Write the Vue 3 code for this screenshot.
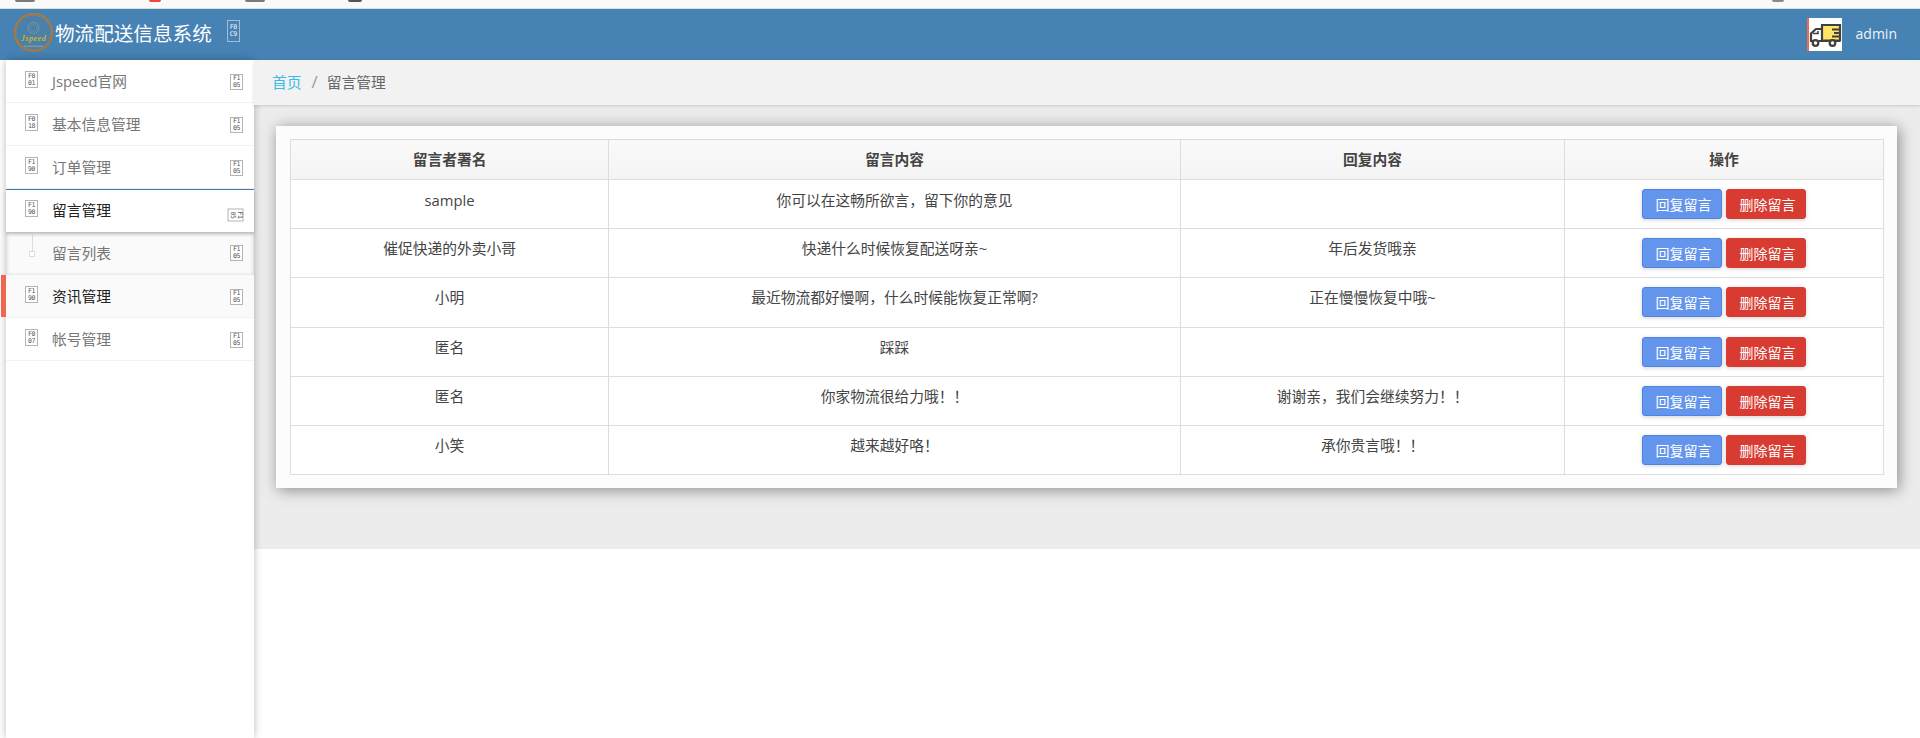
<script setup>
const menu = [
  { label: 'Jspeed官网', icon: ['F0', '01'] },
  { label: '基本信息管理', icon: ['F0', '18'] },
  { label: '订单管理', icon: ['F1', '90'] },
  { label: '留言管理', icon: ['F1', '90'], open: true },
  { label: '留言列表', sub: true },
  { label: '资讯管理', icon: ['F1', '90'], hot: true },
  { label: '帐号管理', icon: ['F0', '07'] }
]
const rows = [
  ['sample', '你可以在这畅所欲言，留下你的意见', ''],
  ['催促快递的外卖小哥', '快递什么时候恢复配送呀亲~', '年后发货哦亲'],
  ['小明', '最近物流都好慢啊，什么时候能恢复正常啊?', '正在慢慢恢复中哦~'],
  ['匿名', '踩踩', ''],
  ['匿名', '你家物流很给力哦！！', '谢谢亲，我们会继续努力！！'],
  ['小笑', '越来越好咯！', '承你贵言哦！！']
]
</script>

<template>
  <div class="page">
    <div class="chrome">
      <i class="tab t1"></i><i class="tab t2"></i><i class="tab t3"></i><i class="tab t4"></i><i class="tab t5"></i>
    </div>
    <header class="topbar">
      <svg class="logo" viewBox="0 0 40 42" aria-hidden="true">
        <circle cx="19.5" cy="19.5" r="18.8" fill="#4a80aa" stroke="#c9731c" stroke-width="1.5" />
        <circle cx="19.5" cy="19.5" r="17.2" fill="none" stroke="#8f8a6a" stroke-width=".5" />
        <circle cx="19.5" cy="15" r="5.5" fill="none" stroke="#8fa0a0" stroke-width=".7" />
        <circle cx="19.5" cy="15" r="3.4" fill="none" stroke="#8fa0a0" stroke-width=".4" />
        <text x="19.5" y="28" text-anchor="middle" class="logo-word">Jspeed</text>
        <rect x="10" y="32.5" width="19" height="1.6" fill="#9aa08a" opacity=".7" />
      </svg>
      <span class="title">物流配送信息系统</span>
      <span class="tofu tofu-head"><b>F0</b><b>C9</b></span>
      <span class="grow"></span>
      <span class="avatar">
        <svg viewBox="0 0 33 33" width="33" height="33" aria-hidden="true">
          <path d="M13 7h18v15.500H13z" fill="#ffe566" stroke="#404040" stroke-width="2.200" />
          <path d="M23 11.500h8M25 15h6M23 18.500h8" stroke="#404040" stroke-width="1.800" />
          <path d="M13 11H7l-5 4.500v7.500h3M9.500 23h10M27 23h4" fill="none" stroke="#404040" stroke-width="2.200" />
          <path d="M4 15.500h5v-2.500" fill="none" stroke="#404040" stroke-width="1.600" />
          <circle cx="6.500" cy="25" r="2.800" fill="#fff" stroke="#404040" stroke-width="2.200" />
          <circle cx="23.500" cy="25" r="2.800" fill="#fff" stroke="#404040" stroke-width="2.200" />
        </svg>
      </span>
      <span class="user">admin</span>
    </header>
    <div class="body">
      <aside class="side">
        <div
          v-for="m in menu"
          :key="m.label"
          class="item"
          :class="{ open: m.open, sub: m.sub, hot: m.hot }"
        >
          <span v-if="m.icon" class="tofu tofu-lead"><b>{{ m.icon[0] }}</b><b>{{ m.icon[1] }}</b></span>
          <span v-else class="tree"></span>
          <span class="label">{{ m.label }}</span>
          <span class="tofu tofu-arrow" :class="{ turned: m.open }"><b>F1</b><b>05</b></span>
        </div>
      </aside>
      <main class="main">
        <div class="panel">
          <nav class="crumb">
            <a class="home">首页</a>
            <span class="sep">/</span>
            <span class="here">留言管理</span>
          </nav>
          <section class="card">
            <table>
              <colgroup>
                <col class="c1" /><col class="c2" /><col class="c3" /><col class="c4" />
              </colgroup>
              <thead>
                <tr><th>留言者署名</th><th>留言内容</th><th>回复内容</th><th>操作</th></tr>
              </thead>
              <tbody>
                <tr v-for="(r, i) in rows" :key="i">
                  <td v-for="(c, j) in r" :key="j">{{ c }}</td>
                  <td class="ops">
                    <button class="btn blue">回复留言</button>
                    <button class="btn red">删除留言</button>
                  </td>
                </tr>
              </tbody>
            </table>
          </section>
        </div>
      </main>
    </div>
  </div>
</template>

<style>
html, body { margin: 0; background: #fff; }
</style>

<style scoped>
.page {
  height: 738px;
  overflow: hidden;
  display: flex;
  flex-direction: column;
  font-family: "Open Sans", "Noto Sans CJK SC", sans-serif;
  font-size: 14.75px;
  color: #555;
}
.chrome {
  height: 8px;
  flex: none;
  background: #f9f9f9;
  border-bottom: 1px solid #dcdcdc;
  display: flex;
  align-items: flex-start;
}
.tab { display: block; height: 2px; border-radius: 0 0 3px 3px; background: #7a7a7a; }
.t1 { width: 20px; margin-left: 15px; }
.t2 { width: 12px; margin-left: 114px; background: #f2443a; border-radius: 0 0 6px 6px; }
.t3 { width: 20px; margin-left: 84px; }
.t4 { width: 14px; margin-left: 83px; background: #555; border-radius: 0 0 7px 7px; }
.t5 { width: 12px; margin-left: 1410px; background: #8a8a8a; }

.topbar {
  height: 51px;
  flex: none;
  background: #4682b4;
  display: flex;
  align-items: flex-start;
  color: #fff;
}
.logo { width: 40px; height: 42px; margin: 4px 0 0 14px; flex: none; }
.logo-word {
  font-family: "Liberation Serif", serif;
  font-style: italic;
  font-weight: 700;
  font-size: 8.5px;
  letter-spacing: .3px;
  fill: #c9b02c;
}
.title { font-size: 19.6px; line-height: 28px; margin: 11px 0 0 1px; white-space: nowrap; }
.grow { flex: 1; }
.avatar {
  width: 33px;
  height: 33px;
  margin-top: 9px;
  background: #fff;
  border-left: 2px solid #f4694c;
  flex: none;
}
.avatar svg { display: block; }
.user { font-size: 14px; line-height: 20px; margin: 15px 23px 0 14px; color: #eef3f8; }

.tofu {
  box-sizing: border-box;
  display: inline-flex;
  flex-direction: column;
  align-items: center;
  justify-content: center;
  flex: none;
  width: 13px;
  height: 17px;
  border: 1px solid #b4b4b4;
  font-family: "DejaVu Sans Mono", monospace;
  font-size: 6.5px;
  line-height: 7px;
  letter-spacing: -.3px;
  color: #555;
  background: #fff;
}
.tofu b { font-weight: 400; display: block; }
.tofu-head {
  height: 22px;
  margin: 11px 0 0 15px;
  background: transparent;
  border-color: #9dbdd8;
  color: #f0f5fa;
}
.tofu-lead { margin-top: 11px; }
.tofu-arrow { height: 16px; margin: 14px 0 0 auto; }
.tofu-arrow.turned { transform: rotate(90deg); margin: 17px 1px 0 auto; }

.body { flex: 1; display: flex; min-height: 0; padding-left: 6px; }
.side {
  width: 248px;
  flex: none;
  background: #fff;
  box-shadow: 0 0 8px rgba(0, 0, 0, .28);
  position: relative;
  z-index: 1;
}
.item {
  box-sizing: border-box;
  height: 43px;
  display: flex;
  align-items: flex-start;
  padding: 0 11px 0 19px;
  border-bottom: 1px solid #f2f2f2;
  position: relative;
  color: #777;
}
.label { margin: 10px 0 0 14px; line-height: 22px; white-space: nowrap; }
.item.open {
  border-top: 1px solid #3f7bb0;
  color: #222;
  border-bottom: 0;
  box-shadow: 0 2px 4px rgba(0, 0, 0, .14);
  z-index: 1;
}
.item.open .label { margin-top: 9px; }
.item.open .tofu-lead { margin-top: 10px; }
.item.sub { background: #fafafa; box-shadow: 0 1px 4px rgba(0, 0, 0, .22) inset; border-bottom: 0; }
.item.sub .tofu-arrow { margin-top: 13px; }
.item.hot { background: #fafafa; color: #222; }
.item.hot::before {
  content: "";
  position: absolute;
  left: -5px;
  top: 0;
  bottom: 0;
  width: 5px;
  background: #ee6650;
}
.tree { width: 13px; flex: none; position: relative; align-self: stretch; }
.tree::before {
  content: "";
  position: absolute;
  left: 7px;
  top: 0;
  height: 19px;
  width: 1px;
  background: #ddd;
}
.tree::after {
  content: "";
  position: absolute;
  left: 4px;
  top: 19px;
  width: 4px;
  height: 4px;
  border: 1px solid #ddd;
  background: #fff;
}

.main { flex: 1; min-width: 0; }
.panel { height: 489px; background: #ececec; position: relative; }
.crumb {
  box-sizing: border-box;
  height: 45px;
  padding: 0 0 2px 18px;
  display: flex;
  align-items: center;
  background: #f2f2f2;
  box-shadow: 0 1px 3px rgba(0, 0, 0, .15);
  position: relative;
  z-index: 2;
}
.home { color: #3cb9e6; }
.sep { margin: 0 9px 0 10px; color: #999; font-size: 17px; }
.here { color: #666; }
.card {
  margin: 21px 23px 0 22px;
  padding: 13px 13px 13px 14px;
  background: #fcfcfc;
  box-shadow: 2px 2px 14px rgba(0, 0, 0, .42);
}
table {
  width: 100%;
  table-layout: fixed;
  border-collapse: collapse;
  background: #fff;
  color: #444;
}
.c1 { width: 318px; }
.c2 { width: 572px; }
.c3 { width: 384px; }
.c4 { width: 319px; }
th, td { border: 1px solid #ddd; text-align: center; padding: 0; }
th {
  height: 40px;
  box-sizing: border-box;
  padding-bottom: 2px;
  font-weight: 700;
  color: #444;
  background: linear-gradient(#f9f9f9, #f4f4f4);
}
td { height: 49.2px; vertical-align: top; line-height: 20px; padding-top: 9px; box-sizing: border-box; }
tbody tr:first-child td { padding-top: 10px; }
tbody tr td.ops { padding-top: 9px; line-height: 0; }
.btn {
  box-sizing: border-box;
  width: 80px;
  height: 30px;
  margin: 0 2px;
  padding: 1px 0 0 3px;
  font: inherit;
  font-size: 14px;
  line-height: 27px;
  color: #fff;
  border-radius: 3px;
  box-shadow: 0 1px 4px rgba(0, 0, 0, .18);
  vertical-align: top;
}
.blue { background: #6495ed; border: 1px solid #4f83e6; }
.red { background: #d83b31; border: 1px solid #d83b31; }
</style>
